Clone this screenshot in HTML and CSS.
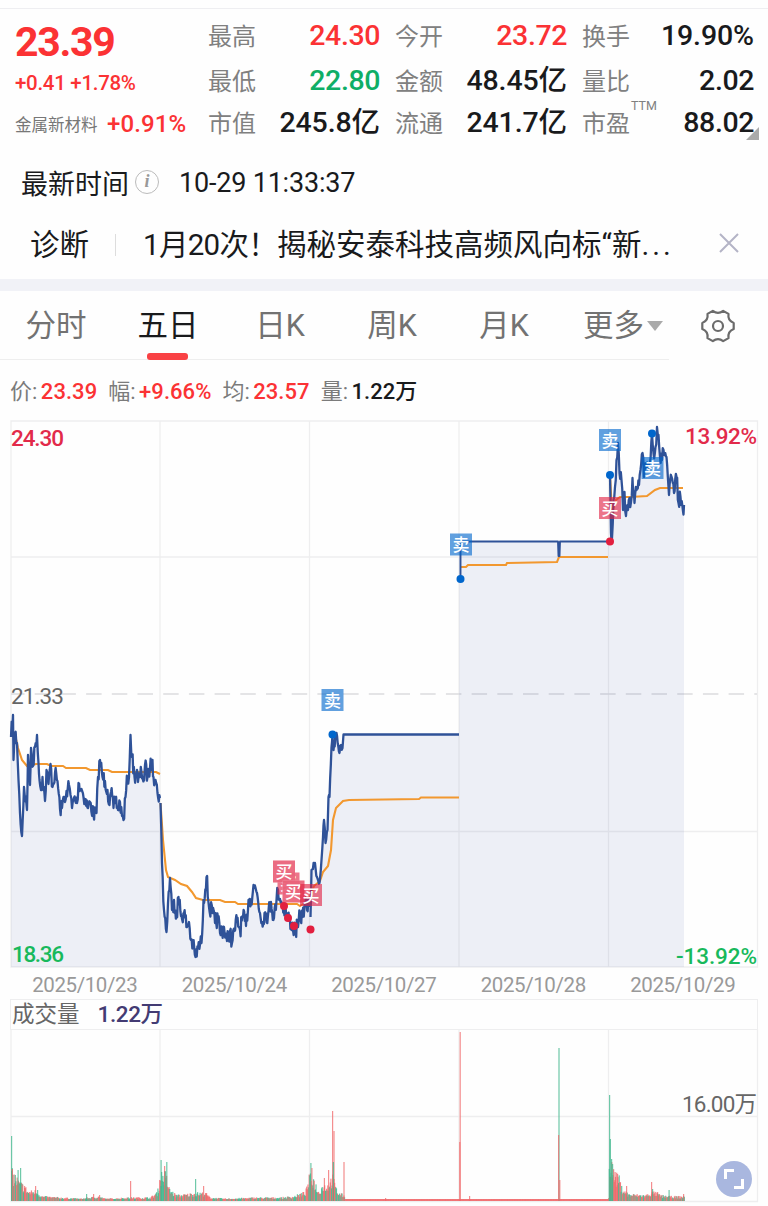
FILE: index.html
```html
<!DOCTYPE html>
<html lang="zh-CN">
<head>
<meta charset="UTF-8">
<meta name="viewport" content="width=device-width, initial-scale=1.0">
<title>安泰科技</title>
<link rel="stylesheet" href="styles.css">
</head>
<body>

<div class="quote">
    <div class="summary">
        <div class="price">23.39</div>
        <div class="change">+0.41 +1.78%</div>
        <div class="sector"><span>金属新材料</span><b>+0.91%</b></div>
    </div>
    <div class="stats">
        <div class="stat"><span>最高</span><b class="up">24.30</b></div>
        <div class="stat"><span>今开</span><b class="up">23.72</b></div>
        <div class="stat"><span>换手</span><b class="wide">19.90%</b></div>
        <div class="stat"><span>最低</span><b class="down">22.80</b></div>
        <div class="stat"><span>金额</span><b class="wide">48.45亿</b></div>
        <div class="stat"><span>量比</span><b>2.02</b></div>
        <div class="stat"><span>市值</span><b class="wide">245.8亿</b></div>
        <div class="stat"><span>流通</span><b class="wide">241.7亿</b></div>
        <div class="stat"><span>市盈<sup>TTM</sup></span><b>88.02</b><i class="corner"></i></div>
    </div>
</div>

<div class="time-row">
    <span>最新时间</span>
    <i class="info">i</i>
    <span class="clock">10-29 11:33:37</span>
</div>

<div class="news-row">
    <span class="news-tag">诊断</span>
    <span class="news-line"></span>
    <span class="news-text"><span class="tight">1月20次！</span>揭秘安泰科技高频风向标“新<span class="dots">...</span></span>
    <svg class="close" width="20" height="20" viewBox="0 0 20 20"><path d="M1 1L19 19M19 1L1 19"/></svg>
</div>

<div class="tabs">
    <div class="tab">分时</div>
    <div class="tab active">五日</div>
    <div class="tab">日K</div>
    <div class="tab">周K</div>
    <div class="tab">月K</div>
    <div class="tab more">更多<i class="arrow"></i></div>
    <svg class="gear" width="36" height="36" viewBox="-18 -18 36 36">
        <path d="M15.7 -3.05L15.7 3.05Q9.5 5.5 10.5 12.1L5.2 15.1Q0 11 -5.2 15.1L-10.5 12.1Q-9.5 5.5 -15.7 3.05L-15.7 -3.05Q-9.5 -5.5 -10.5 -12.1L-5.2 -15.1Q0 -11 5.2 -15.1L10.5 -12.1Q9.5 -5.5 15.7 -3.05Z"/>
        <circle r="5"/>
    </svg>
</div>

<div class="legend">
    <span>价:<b class="up">23.39</b></span>
    <span>幅:<b class="up">+9.66%</b></span>
    <span>均:<b class="up">23.57</b></span>
    <span>量:<b>1.22万</b></span>
</div>

<svg class="chart" width="768" height="557" viewBox="0 414 768 557">
    <g class="grid">
        <path d="M11 421H757.5V967H11ZM160 421V967M309.5 421V967M459 421V967M608.5 421V967M11 557H757M11 831.5H757"/>
        <path class="dashed" d="M11 694H757"/>
    </g>
    <g id="price"></g>
    <g id="marks"></g>
    <text class="axis high" x="11" y="445.5" textLength="53">24.30</text>
    <text class="axis mid" x="11" y="704" textLength="53">21.33</text>
    <text class="axis low" x="12" y="962" textLength="52">18.36</text>
    <text class="axis high" x="685" y="443.5" textLength="72">13.92%</text>
    <text class="axis low" x="676" y="964" textLength="81">-13.92%</text>
</svg>

<div class="dates">
    <span>2025/10/23</span>
    <span>2025/10/24</span>
    <span>2025/10/27</span>
    <span>2025/10/28</span>
    <span>2025/10/29</span>
</div>

<div class="volume-head"><span>成交量</span><b>1.22万</b></div>

<div class="volume">
    <svg class="chart" width="768" height="177" viewBox="0 1029 768 177">
        <g class="grid">
            <path d="M11 1029V1201.5H757.5V1029M160 1029V1201M309.5 1029V1201M459 1029V1201M608.5 1029V1201M11 1116.5H757"/>
        </g>
        <g id="bars"></g>
        <text class="axis mid" x="682" y="1111.5" textLength="75">16.00万</text>
    </svg>
    <div class="expand">
        <svg width="20" height="20" viewBox="0 0 20 20"><path d="M1.5 10V1.5H10M10 18.5H18.5V10"/></svg>
    </div>
</div>

<script src="chart.js"></script>
</body>
</html>
```

FILE: styles.css
```css
* {
    box-sizing: border-box;
}
body {
    margin: 0;
    width: 768px;
    height: 1206px;
    overflow: hidden;
    background-color: #fefefe;
    color: #191a1c;
    font-family: Roboto, "Noto Sans CJK SC", sans-serif;
}
b, i {
    font-style: normal;
    font-weight: 500;
}
.up {
    color: #fb3234;
}
.down {
    color: #0fae66;
}

/* quote */
.quote {
    display: flex;
    height: 143px;
    margin-top: 8px;
    padding: 6px 14px 0 15px;
    border-top: 1px solid #eeeef1;
}
.summary {
    width: 193px;
    color: #fb3234;
}
.price {
    height: 55px;
    line-height: 55px;
    font-size: 41px;
    font-weight: 700;
    letter-spacing: -1.3px;
}
.change {
    height: 27px;
    line-height: 27px;
    font-size: 20.5px;
    letter-spacing: -0.3px;
    font-weight: 500;
}
.sector {
    display: flex;
    align-items: center;
    height: 53px;
}
.sector span {
    width: 92px;
    font-size: 16.5px;
    color: #777;
    white-space: nowrap;
}
.sector b {
    font-size: 24px;
    letter-spacing: 0.1px;
}
.stats {
    flex: 1;
    display: grid;
    grid-template-columns: repeat(3, 172px);
    grid-template-rows: 44.5px 42.5px 42px;
    column-gap: 15px;
}
.stat {
    position: relative;
    display: flex;
    justify-content: space-between;
    align-items: baseline;
}
.stat span {
    font-size: 24px;
    line-height: 44px;
    color: #808080;
}
.stat b {
    font-size: 28.5px;
    line-height: 30px;
    letter-spacing: -0.4px;
    white-space: nowrap;
}
.stat .wide {
    letter-spacing: -0.1px;
}
.stat sup {
    position: absolute;
    left: 49px;
    top: -3px;
    font-size: 12.5px;
    line-height: 13px;
}
.corner {
    position: absolute;
    right: -5px;
    bottom: 4px;
    border-left: 13px solid transparent;
    border-bottom: 13px solid #aaa;
}

/* time and news */
.time-row {
    display: flex;
    align-items: center;
    height: 64px;
    padding: 0 0 2px 21px;
    font-size: 27px;
}
.info {
    width: 24px;
    height: 24px;
    margin: 0 20px 1px 6px;
    border: 1.5px solid #bbb;
    border-radius: 50%;
    color: #999;
    font: italic 700 18px/21px "Liberation Serif", serif;
    text-align: center;
}
.clock {
    padding-top: 2px;
    font-size: 27px;
    letter-spacing: -0.2px;
}
.news-row {
    display: flex;
    align-items: center;
    height: 64px;
    padding: 0 29px 10px 30px;
    font-size: 29.5px;
}
.news-line {
    width: 1px;
    height: 22px;
    margin: 6px 27px 0 26px;
    background-color: #ddd;
}
.news-text {
    flex: 1;
    white-space: nowrap;
}
.tight {
    letter-spacing: -0.7px;
}
.dots {
    letter-spacing: 3px;
}
.close {
    margin-top: 2px;
    fill: none;
    stroke: #b4b4c6;
    stroke-width: 2;
}

/* tabs */
.tabs {
    display: grid;
    grid-template-columns: repeat(6, 112px) 96px;
    position: relative;
    height: 81px;
    border-top: 12px solid #f1f2f7;
}
.tabs::after {
    content: "";
    position: absolute;
    left: 0;
    bottom: 0;
    width: 669px;
    height: 1px;
    background-color: #eee;
}
.tab {
    position: relative;
    height: 69px;
    line-height: 69px;
    text-align: center;
    font-size: 30.5px;
    color: #727272;
}
.tab.active {
    color: #191a1c;
}
.tab.active::after {
    content: "";
    position: absolute;
    z-index: 1;
    left: 35px;
    bottom: 0;
    width: 41px;
    height: 7px;
    border-radius: 3px;
    background-color: #f94144;
}
.tab.more {
    display: flex;
    justify-content: center;
    align-items: center;
    padding-left: 14px;
}
.arrow {
    margin-left: 3px;
    border: 8px solid transparent;
    border-top: 10px solid #aaa;
    border-bottom: 0;
}
.gear {
    margin: 17px 0 0 28px;
    fill: none;
    stroke: #6b6b6b;
    stroke-width: 2.2;
    stroke-linejoin: round;
}

/* charts */
.legend {
    display: flex;
    gap: 11px;
    height: 54px;
    padding-left: 10px;
    line-height: 63px;
    font-size: 22px;
    color: #7b7b7b;
}
.legend b {
    margin-left: 3.5px;
    letter-spacing: 0.05px;
}
.legend b:not(.up) {
    color: #191a1c;
}
.chart {
    display: block;
}
.grid {
    fill: none;
    stroke: #eeeeef;
    stroke-width: 1.3;
}
.dashed {
    stroke: #dcdcde;
    stroke-width: 1.6;
    stroke-dasharray: 15.5 10.2;
    stroke-dashoffset: 2;
}
.area {
    fill: rgba(90, 110, 180, 0.105);
}
.line {
    fill: none;
    stroke: #2f5298;
    stroke-width: 2.3;
    stroke-linejoin: round;
}
.line.flat {
    stroke-width: 1.9;
}
.average {
    fill: none;
    stroke: #f2982f;
    stroke-width: 2.1;
}
.axis {
    font-size: 22.5px;
    font-weight: 500;
}
.high {
    fill: #e22a4a;
}
.mid {
    fill: #666;
    font-weight: 400;
}
.low {
    fill: #18b95c;
}
.buy {
    fill: rgba(224, 32, 66, 0.62);
}
.sell {
    fill: rgba(0, 102, 204, 0.62);
}
.dot-buy {
    fill: #e21f3f;
}
.dot-sell {
    fill: #0066cc;
}
.mark {
    fill: #fff;
    font-size: 17px;
    font-weight: 500;
    text-anchor: middle;
}
.dates {
    display: grid;
    grid-template-columns: repeat(5, 149.5px);
    height: 28px;
    padding-left: 10px;
    line-height: 29px;
    font-size: 20.5px;
    letter-spacing: -0.4px;
    text-align: center;
    color: #999;
}
.volume-head {
    display: flex;
    height: 31px;
    margin: 0 10px;
    padding-left: 1px;
    border: 1px solid #eeeeef;
    line-height: 28px;
    font-size: 22.5px;
    color: #666;
}
.volume-head b {
    margin-left: 18px;
    letter-spacing: -0.4px;
    color: #433b73;
}
.volume {
    position: relative;
    margin-top: -1px;
}
.expand {
    position: absolute;
    right: 16px;
    top: 132px;
    display: flex;
    align-items: center;
    justify-content: center;
    width: 36px;
    height: 36px;
    border-radius: 50%;
    background-color: #a9b7df;
}
.expand path {
    fill: none;
    stroke: #fff;
    stroke-width: 3;
}
```

FILE: chart.js
```js
var SVG = "http://www.w3.org/2000/svg";
var bottom = 967;
var seed = 7;

function rand() {
    seed = (seed * 16807) % 2147483647;
    return seed / 2147483647;
}

function add(parent, tag, attrs, text) {
    var el = document.createElementNS(SVG, tag);
    for (var key in attrs) el.setAttribute(key, attrs[key]);
    if (text) el.textContent = text;
    document.getElementById(parent).appendChild(el);
}

// [x, y, x, y, ...] for every session, noise is the minute-by-minute wobble
var sessions = [
    { noise: 8, points: [11,737, 13,715, 13.5,760, 15,733, 17,743, 18.5,780, 20,813, 22,836, 24,787, 27,810, 28,755, 30,785, 31,748, 33,766, 35,747, 37,735, 38.5,763, 39.5,780, 41,790, 42.5,777, 45,801, 46.5,770, 48.5,784, 50.5,764, 52.5,787, 55,773, 57.5,781, 60,809, 62,808, 63.5,797, 65,802, 66.5,791, 69,785, 70.5,795, 72,808, 74,798, 77,803, 78.5,783, 81.5,789, 85,799, 88,808, 90,802, 93.5,815, 96.5,813, 98,777, 100,760, 102.5,777, 105,781, 107.5,790, 109.5,805, 111,792, 113.5,808, 115.5,798, 118,810, 120,802, 122,816, 123.5,820, 125.5,797, 127.5,777, 129,777, 130.5,735, 132,757, 134.5,777, 137,770, 138,782, 141.5,772, 144,780, 145,765, 147.5,777, 150,768, 152.5,760, 153.5,777, 155.5,780, 157.5,793, 160,798] },
    { noise: 9, points: [160.5,803, 162,863, 164,910, 166.5,932, 168,903, 170,878, 172,910, 174,900, 176.5,916, 178.5,897, 181,916, 184,913, 187,927, 189,922, 191,940, 193,946, 195.5,957, 198,948, 201.5,943, 203.5,900, 206.5,877, 209,907, 212.5,913, 215,923, 218,918, 220,933, 224,927, 227,941, 230,931, 232,943, 234.5,931, 237,920, 240,930, 243,917, 246,926, 248.5,900, 251,900, 253.5,885, 257,893, 260,913, 262,922, 264.5,913, 268,915, 271,902, 274,918, 276.5,900, 278,890, 282,903, 285,910, 288,917, 291,923, 295,931, 298,927, 300,915, 302.5,917, 305,900, 307,910, 309,907] },
    { noise: 4, points: [310.5,917, 311.5,870, 315,863, 317,877, 319.5,883, 321.5,860, 323,837, 324,820, 325.5,843, 327.5,830, 328.5,797, 329.5,797, 331.5,747, 332.5,735, 333.5,750, 336.5,733, 339.5,753, 341,745, 342.5,748, 343.5,734.5, 459,734.5] },
    { noise: 0, points: [460.5,579, 460.5,541.5, 558,541.5, 558.5,556, 559.5,556, 560,541.5, 608,541.5] },
    { noise: 8, points: [610,475, 611,533, 612,538, 613.5,500, 615,487, 616.5,460, 618,443, 619.5,473, 621.5,480, 623,510, 624.5,492, 626,516, 628,510, 629.5,498, 631,502, 632.5,478, 634.5,503, 636.5,490, 639,485, 640.5,470, 642.5,453, 644,477, 646.5,463, 650,463, 652,434, 653.5,453, 655.5,447, 657,427, 658.5,435, 660,457, 662,460, 663.5,450, 666.5,457, 668.5,487, 669,495, 671.5,477, 674,493, 676.5,477, 678.5,503, 680.5,497, 683,511, 684,505] }
];

var averages = [
    "11,735 15,735 18,748 22,760 27,766 36,764 47,764 51,766 63,766 66,768 86,768 90,770 108,770 112,772 156,772 160,774",
    "160.5,803 163,840 166,870 168,877 175,880 181,884 187,886 192,892 196,898 203,900 220,900 225,902 235,902 238,904 297,904 300,906 303,904",
    "303,904 309,900 314,886 320,881 323,872 328,866 331,850 333,820 336,808 343,801 349,800 419,799 421,797.5 459,797.5",
    "461,567 466,567 468,565 506,565 507,563 557,562 559,557 608,557",
    "610,475 612,512 616,500 620,497 630,497 647,496 655,490 660,488 683,488"
];

var lines = sessions.map(function (s) {
    var p = s.points;
    var out = [[p[0], p[1]]];
    for (var i = 2; i < p.length; i += 2) {
        var x0 = p[i - 2], y0 = p[i - 1], dx = p[i] - x0, dy = p[i + 1] - y0;
        var steps = dx > 20 ? 1 : Math.max(1, Math.round(dx / 0.65));
        for (var k = 1; k < steps; k++) {
            out.push([x0 + dx * k / steps, y0 + dy * k / steps + (rand() - 0.5) * 2 * s.noise]);
        }
        out.push([p[i], p[i + 1]]);
    }
    return out;
});

// the fill runs unbroken from one session into the next
var start = "11," + bottom + " ";
var all = lines[0].concat(lines[1], lines[2], [[459, 541.5], [460.5, 541.5]], lines[3].slice(2), [[609, 541.5]], lines[4]);
add("price", "polygon", { "class": "area", points: start + all.join(" ") + " 684," + bottom });

averages.forEach(function (pts) {
    add("price", "polyline", { "class": "average", points: pts });
});
lines.forEach(function (pts, i) {
    add("price", "polyline", { "class": i == 3 ? "line flat" : "line", points: pts.join(" ") });
});

// trades: badge corner
[["sell", 450, 533.5], ["sell", 599, 429], ["sell", 641.5, 457], ["buy", 599, 497], ["sell", 321.5, 689],
 ["buy", 277.5, 872.5], ["buy", 273, 860.5], ["buy", 282.5, 880.5], ["buy", 300, 884]].forEach(function (m) {
    // stacked badges hide the one below
    if (m[1] == 282.5 || m[1] == 273) {
        add("marks", "rect", { x: m[1], y: m[2], width: 22, height: 22, fill: "#fbe3e8", opacity: 0.85 });
    }
    add("marks", "rect", { "class": m[0], x: m[1], y: m[2], width: 22, height: 22 });
    add("marks", "text", { "class": "mark", x: m[1] + 11, y: m[2] + 17.5 }, m[0] == "buy" ? "买" : "卖");
});
// trades: dots on the line
[["sell", 460.5, 579], ["sell", 610, 475], ["sell", 652, 433.5], ["sell", 332.5, 734.5], ["buy", 610, 541.5],
 ["buy", 284, 906], ["buy", 288, 918], ["buy", 294, 926], ["buy", 310.5, 929.5]].forEach(function (d) {
    add("marks", "circle", { "class": "dot-" + d[0], cx: d[1], cy: d[2], r: 4 });
});

// usual volume level along the axis: x, height
var level = [11,26, 15,22, 18,17, 24,13, 28,8, 35,9, 42,4, 60,3, 80,2, 98,4, 105,2, 128,3, 150,3, 157,8, 160,24, 165,24, 169,10, 176,5, 188,6, 193,7, 204,7, 210,3, 225,2, 255,3, 280,3, 293,4, 305,8, 309,22, 313,20, 318,8, 322,14, 327,14, 332,22, 335,12, 338,7, 344,5, 344.5,1, 608,1, 609,40, 611,34, 614,22, 618,22, 621,12, 628,6, 645,5, 653,8, 660,5, 668,4, 684,4];
var RED = "#f0686a", GREEN = "#3fb78c";

function levelAt(x) {
    for (var i = 2; i < level.length; i += 2) {
        if (x <= level[i]) {
            var t = (x - level[i - 2]) / (level[i] - level[i - 2]);
            return level[i - 1] + (level[i + 1] - level[i - 1]) * t;
        }
    }
    return 0;
}

function bar(x, h, color, opacity) {
    add("bars", "rect", { x: x, y: 1201 - h, width: 1.2, height: h, fill: color, opacity: opacity || 0.8 });
}

for (var x = 11; x < 684; x += 0.62) {
    var flat = x > 344.5 && x < 608;
    var h = flat ? 2 : levelAt(x) * (0.6 + rand() * 0.7);
    var color = flat || rand() > 0.48 ? RED : GREEN;
    if (x > 160 && x < 164) color = GREEN;
    bar(x, Math.max(2, h), color);
}
[[11,65,GREEN], [11.8,32,RED], [17.5,31,GREEN], [20,33,GREEN], [24,15,RED], [35,15,RED], [37,11,GREEN], [86,7,GREEN], [93,7,RED], [99,6,RED],
 [130,20,RED], [160.5,41,GREEN], [164,35,RED], [166.2,39,GREEN], [195,22,GREEN], [203,15,RED], [206,8,RED],
 [310.3,38,GREEN], [311.3,33,RED], [323.8,23,RED], [328,31,RED], [332,90,RED], [333.4,70,RED], [332.8,39,GREEN], [343.4,39,RED],
 [385,3,RED], [459.6,169,RED], [459.2,59,RED], [469,5,RED], [558.4,153,GREEN], [558,66,RED], [559.2,21,RED],
 [609,106,GREEN], [609.8,62,GREEN], [611,42,GREEN], [612,37,GREEN], [614.5,29,RED], [617,27,RED], [626,15,RED], [651,19,RED], [652,12,GREEN], [657,9,RED], [668.5,11,GREEN], [683,7,RED]].forEach(function (s) {
    bar(s[0], s[1], s[2], 0.75);
});
```
